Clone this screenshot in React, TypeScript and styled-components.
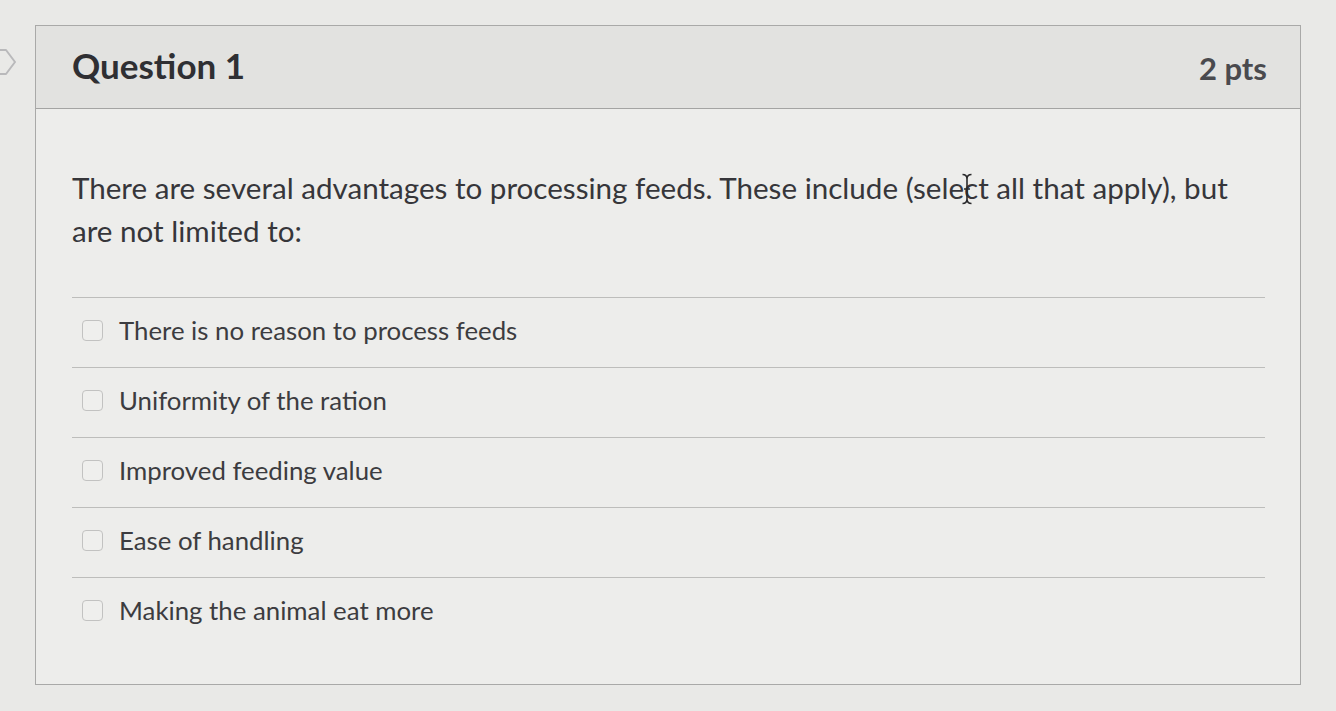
import * as React from 'react';
import styled, { createGlobalStyle } from 'styled-components';

const GlobalStyle = createGlobalStyle`
  html, body {
    margin: 0;
    padding: 0;
    background: #e9e9e7;
  }
  body {
    font-family: Lato, 'Open Sans', 'Liberation Sans', sans-serif;
    color: #3a3a3d;
  }
`;

const answers = [
  'There is no reason to process feeds',
  'Uniformity of the ration',
  'Improved feeding value',
  'Ease of handling',
  'Making the animal eat more',
];

const App: React.FC = () => {
  return (
    <>
      <GlobalStyle />
      <Page>
        <Gutter>
          <svg width="35" height="40" viewBox="0 0 35 40">
            <path
              d="M-6 4 L6 4 L15 16 L6 28 L-6 28"
              fill="none"
              stroke="#b9b9bb"
              strokeWidth="2"
              strokeLinejoin="round"
            />
          </svg>
        </Gutter>
        <Card>
          <Header>
            <Title>Question 1</Title>
            <Points>2 pts</Points>
          </Header>
          <Body>
            <QuestionText>
              There are several advantages to processing feeds. These include (select all that apply), but are not limited to:
              {/* mouse cursor sitting over the text */}
              <IBeam viewBox="0 0 12 32">
                <path
                  d="M1.5 1.5 Q6 1.5 6 6 Q6 1.5 10.5 1.5 M6 6 L6 26 M1.5 30.5 Q6 30.5 6 26 Q6 30.5 10.5 30.5 M3 16 L9 16"
                  fill="none"
                  stroke="#2a2a2c"
                  strokeWidth="1.6"
                />
              </IBeam>
            </QuestionText>
            <Answers>
              {answers.map((a) => (
                <Answer key={a}>
                  <Check />
                  <AnswerLabel>{a}</AnswerLabel>
                </Answer>
              ))}
            </Answers>
          </Body>
        </Card>
      </Page>
    </>
  );
};

export default App;

const Page = styled.div`
  display: flex;
  align-items: flex-start;
  padding: 25px 0 26px 0;
  min-height: 660px;
`;

const Gutter = styled.div`
  width: 35px;
  flex: none;
  padding-top: 21px;
  svg {
    display: block;
  }
`;

const Card = styled.div`
  width: 1264px;
  border: 1px solid #a9a9a8;
  background: #ededeb;
`;

const Header = styled.div`
  height: 82px;
  display: flex;
  align-items: center;
  justify-content: space-between;
  padding: 0 33px 0 36px;
  background: #e2e2e0;
  border-bottom: 1px solid #a4a4a3;
`;

const Title = styled.div`
  font-size: 35px;
  font-weight: 700;
  color: #2f2f33;
  margin-top: -4px;
`;

const Points = styled.div`
  font-size: 31px;
  font-weight: 700;
  color: #4a4a4e;
  margin-top: 2px;
`;

const Body = styled.div`
  padding: 57px 35px 37px 36px;
`;

const QuestionText = styled.p`
  position: relative;
  margin: 0 0 45px 0;
  font-size: 29.6px;
  line-height: 43px;
  color: #36363a;
`;

const IBeam = styled.svg`
  position: absolute;
  left: 889px;
  top: 7px;
  width: 12px;
  height: 32px;
  pointer-events: none;
`;

const Answers = styled.div`
  display: flex;
  flex-direction: column;
`;

const Answer = styled.label`
  display: flex;
  align-items: center;
  height: 69px;
  padding-left: 10px;
  border-top: 1px solid #bdbdbb;
`;

const Check = styled.span`
  width: 19px;
  height: 19px;
  flex: none;
  border: 1.5px solid #c2c2c1;
  border-radius: 4px;
  background: #efefed;
  margin-right: 16px;
  margin-top: -4px;
`;

const AnswerLabel = styled.span`
  font-size: 25.8px;
  color: #3c3c40;
  margin-top: -5px;
`;
